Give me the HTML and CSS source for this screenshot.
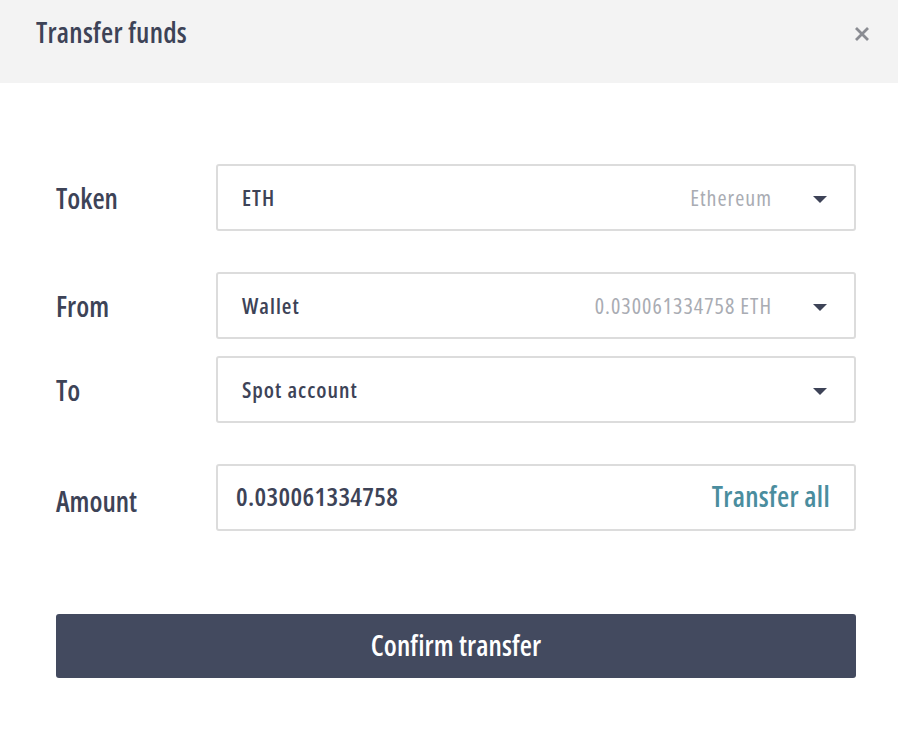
FILE: index.html
```html
<!DOCTYPE html>
<html>
<head>
<meta charset="utf-8">
<link rel="stylesheet" href="styles.css">
</head>
<body>
<div class="modal">
  <div class="header">
    <h1 class="title">Transfer funds</h1>
    <span class="close">
      <svg width="16" height="16" viewBox="0 0 16 16"><path d="M2 2 L14 14 M14 2 L2 14" stroke="#8a8c92" stroke-width="2.8" stroke-linecap="butt"/></svg>
    </span>
  </div>
  <div class="body">
    <div class="row">
      <div class="label">Token</div>
      <div class="field select">
        <span class="value">ETH</span>
        <span class="hint">Ethereum</span>
        <span class="caret"></span>
      </div>
    </div>
    <div class="row gap-lg">
      <div class="label">From</div>
      <div class="field select">
        <span class="value">Wallet</span>
        <span class="hint">0.030061334758 ETH</span>
        <span class="caret"></span>
      </div>
    </div>
    <div class="row gap-sm">
      <div class="label">To</div>
      <div class="field select">
        <span class="value">Spot account</span>
        <span class="hint"></span>
        <span class="caret"></span>
      </div>
    </div>
    <div class="row gap-lg">
      <div class="label amount-label">Amount</div>
      <div class="field amount">
        <span class="amount-value">0.030061334758</span>
        <span class="all">Transfer all</span>
      </div>
    </div>
    <button class="confirm">Confirm transfer</button>
  </div>
</div>
</body>
</html>
```
FILE: styles.css
```css
* { box-sizing: border-box; }
html, body { margin: 0; padding: 0; background: #fff; }
body {
  font-family: "Open Sans", "DejaVu Sans Condensed", sans-serif;
  font-stretch: 75%;
  color: #3d4357;
  width: 898px;
  height: 740px;
}
.header {
  height: 83px;
  background: #f3f3f3;
  display: flex;
  align-items: center;
  justify-content: space-between;
  padding: 0 28px 0 36px;
}
.title {
  margin: 0;
  font-size: 28px;
  font-weight: 600;
  letter-spacing: 0.25px;
  color: #3d4357;
  position: relative;
  top: -10px;
}
.close { display: flex; position: relative; top: -8px; }
.body {
  padding: 81px 42px 0 56px;
}
.row {
  display: flex;
  align-items: center;
}
.gap-lg { margin-top: 41px; }
.gap-sm { margin-top: 17px; }
.label {
  width: 160px;
  font-size: 28px;
  font-weight: 600;
  color: #3d4357;
}
.amount-label { padding-top: 6px; }
.field {
  flex: 1;
  height: 67px;
  border: 2px solid #dcdcdc;
  border-radius: 3px;
  display: flex;
  align-items: center;
}
.select { padding: 0 27px 0 24px; }
.value {
  font-size: 22px;
  font-weight: 600;
  letter-spacing: 1px;
  color: #3d4357;
  flex: 1;
  margin-top: -2px;
}
.hint {
  font-size: 22px;
  font-weight: 500;
  letter-spacing: 1px;
  color: #a9acb3;
  margin-right: 41px;
  margin-top: -2px;
}
.caret {
  width: 0;
  height: 0;
  border-left: 7px solid transparent;
  border-right: 7px solid transparent;
  border-top: 7px solid #3d4357;
  margin-top: 3px;
}
.amount {
  padding: 0 24px 0 18px;
  justify-content: space-between;
}
.amount-value {
  font-size: 26px;
  font-weight: 600;
  letter-spacing: 0.35px;
  color: #3d4357;
  margin-top: -4px;
}
.all {
  font-size: 28px;
  font-weight: 600;
  letter-spacing: 0.3px;
  color: #4a8d9e;
  margin-top: -4px;
}
.confirm {
  display: block;
  width: 100%;
  margin-top: 83px;
  height: 64px;
  border: none;
  border-radius: 3px;
  background: #434a5f;
  color: #fff;
  font-family: inherit;
  font-stretch: inherit;
  font-size: 28px;
  font-weight: 600;
  letter-spacing: 0.1px;
  padding: 0 0 2px;
}
```
